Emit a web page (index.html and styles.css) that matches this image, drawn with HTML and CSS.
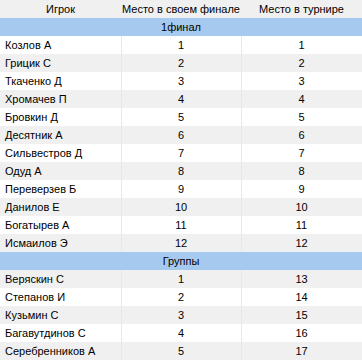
FILE: index.html
```html
<!DOCTYPE html>
<html>
<head>
<meta charset="utf-8">
<link rel="stylesheet" href="styles.css">
</head>
<body>
<table class="grid">
<colgroup><col class="c1"><col class="c2"><col class="c3"></colgroup>
<thead>
<tr class="head"><th>Игрок</th><th>Место в своем финале</th><th>Место в турнире</th></tr>
</thead>
<tbody>
<tr class="group"><td colspan="3">1финал</td></tr>
<tr><td class="name">Козлов А</td><td>1</td><td>1</td></tr>
<tr><td class="name">Грицик С</td><td>2</td><td>2</td></tr>
<tr><td class="name">Ткаченко Д</td><td>3</td><td>3</td></tr>
<tr><td class="name">Хромачев П</td><td>4</td><td>4</td></tr>
<tr><td class="name">Бровкин Д</td><td>5</td><td>5</td></tr>
<tr><td class="name">Десятник А</td><td>6</td><td>6</td></tr>
<tr><td class="name">Сильвестров Д</td><td>7</td><td>7</td></tr>
<tr><td class="name">Одуд А</td><td>8</td><td>8</td></tr>
<tr><td class="name">Переверзев Б</td><td>9</td><td>9</td></tr>
<tr><td class="name">Данилов Е</td><td>10</td><td>10</td></tr>
<tr><td class="name">Богатырев А</td><td>11</td><td>11</td></tr>
<tr><td class="name">Исмаилов Э</td><td>12</td><td>12</td></tr>
<tr class="group"><td colspan="3">Группы</td></tr>
<tr><td class="name">Веряскин С</td><td>1</td><td>13</td></tr>
<tr><td class="name">Степанов И</td><td>2</td><td>14</td></tr>
<tr><td class="name">Кузьмин С</td><td>3</td><td>15</td></tr>
<tr><td class="name">Багавутдинов С</td><td>4</td><td>16</td></tr>
<tr><td class="name">Серебренников А</td><td>5</td><td>17</td></tr>
</tbody>
</table>
</body>
</html>
```
FILE: styles.css
```css
html, body {
  margin: 0;
  padding: 0;
  background: #ffffff;
}
.grid {
  width: 362px;
  border-collapse: collapse;
  table-layout: fixed;
  font-family: "Liberation Sans", Arial, sans-serif;
  font-size: 11px;
  color: #000;
}
.c1 { width: 121px; }
.c2 { width: 120px; }
.c3 { width: 121px; }
.grid th, .grid td {
  height: 18px;
  padding: 0;
  text-align: center;
  white-space: nowrap;
  line-height: 18px;
}
.grid th {
  font-weight: normal;
  background: #f0f0f0;
}
.grid td {
  border-right: 1px solid #e8e8e8;
}
.grid td.name {
  text-align: left;
  padding-left: 5px;
}
.grid tbody tr:nth-child(odd) td { background: #f0f0f0; }
.grid tbody tr:nth-child(even) td { background: #ffffff; }
.grid tbody tr.group td {
  background: #a6c9f0;
  border-right: none;
}
```
